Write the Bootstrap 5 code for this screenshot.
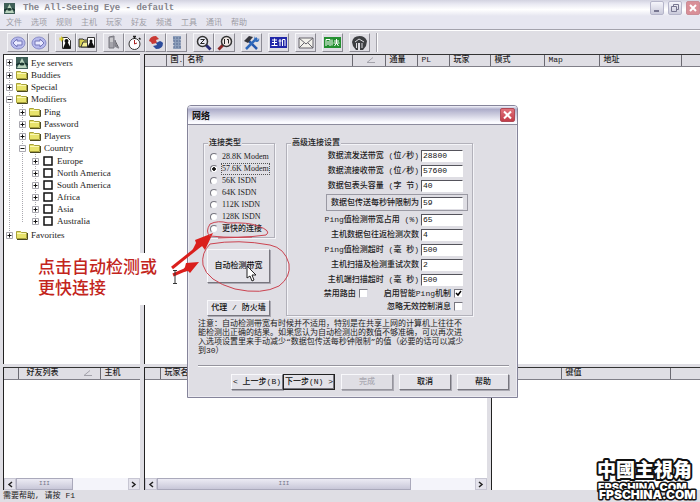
<!DOCTYPE html>
<html lang="zh-CN">
<head>
<meta charset="utf-8">
<meta name="viewport" content="width=device-width, initial-scale=1">
<title>The All-Seeing Eye - default</title>
<link href="https://cdn.jsdelivr.net/npm/bootstrap@5.3.0/dist/css/bootstrap.min.css" rel="stylesheet">
<style>
  :root { --face: #dfdee4; --edge: #85838c; --ink: #1d1c22; }
  body { font: 8px/12px "Liberation Mono", "Noto Sans CJK SC", monospace; color: var(--ink); background: var(--face); overflow: hidden; }
  .title-bar { height: 16px; padding-left: 4px; background: linear-gradient(#d3d3e0, #e9e9f2 25%, #fff 60%, #e6e6f0); }
  .title-bar h1 { font: bold 9px/16px "Liberation Mono", monospace; color: #85848c; }
  .win-btn { width: 14px; height: 14px; border: 1px solid #b5b5ca; border-radius: 2px; background: linear-gradient(#f5f5fb, #c9c9da); }
  .win-btn.shut { background: #d98f98; border-color: #cb8c96; }
  .menu-bar { height: 14px; background: #e6e6f0; border-bottom: 1px solid #a3a2ac; padding-left: 6px; gap: 9px; }
  .menu-bar a { color: #9d9ca5; line-height: 14px; text-decoration: none; }
  .tool-bar { height: 24px; padding: 2px 0 2px 7px; gap: 6px; border-top: 1px solid #fff; }
  .tool { width: 21px; height: 19px; border: 1px solid; border-color: #f6f6f9 #8b8a93 #8b8a93 #f6f6f9; background: var(--face); }
  .tool-end { width: 2px; border-left: 1px solid #a4a3ab; background: #fff; }
  .desk { display: grid; flex: 1; grid-template-rows: 310fr 123fr; gap: 3px; padding: 0 0 0 3px; }
  .row-top, .row-bottom { display: grid; gap: 4px; min-height: 0; }
  .row-top { grid-template-columns: 137fr 556fr; }
  .row-bottom { grid-template-columns: 137fr 343fr 209fr; }
  .pane { background: #fff; border-top: 1px solid #333; border-left: 1px solid #222; min-width: 0; overflow: hidden; }
  .grid-head { table-layout: fixed; width: 100%; border-collapse: collapse; }
  .grid-head th { height: 11px; line-height: 10px; padding: 0 0 0 4px; font-weight: 500; background: var(--face); border-right: 1px solid #6b6a72; border-bottom: 1px solid #807f88; white-space: nowrap; overflow: hidden; }
  .grid-head th:last-child { border-right: 0; }
  .tree, .tree ul { list-style: none; margin: 0; padding: 0; background: repeating-linear-gradient(#aaa9b0 0 1px, #fff 1px 2px) no-repeat; }
  .tree { font: 9px/12px "Liberation Serif", serif; padding: 1px 0 0 2px; background-position: 5px 7px; background-size: 1px calc(100% - 14px); }
  .tree ul { padding: 1px 0 1px 13px; background-position: 16px 0; background-size: 1px calc(100% - 7px); }
  .tree-item { gap: 3px; height: 12px; }
  .tree-item svg { flex: none; }
  .tree .first-item { height: 13px; }
  .scroll { height: 12px; background: #f4f4fa; }
  .scroll button { width: 12px; border: 1px solid #c7c6d3; background: #e4e3ec; padding: 0; }
  .thumb { border: 1px solid #aaa9bb; background: linear-gradient(#ecebf4, #c8c7d8); color: #77768a; font-size: 6px; line-height: 9px; text-align: center; }
  .thumb-half { width: 57px; }
  .thumb-wide { width: 254px; }
  .status { height: 12px; padding-left: 3px; line-height: 12px; }

  .dlg { left: 187px; top: 105px; width: 331px; background: var(--face); border: 1px solid #85849a; border-radius: 4px 4px 0 0; z-index: 5; box-shadow: inset 0 0 0 1px #ecebf1; }
  .dlg-title { height: 19px; padding: 0 2px 0 4px; border-bottom: 1px solid #8d8c9d; border-radius: 3px 3px 0 0; background: linear-gradient(#f4f4fb, #adadca 18%, #cfcfe0 50%, #fbfbff 90%); }
  .dlg-title h2 { font: bold 9px/19px "Noto Sans CJK SC", sans-serif; color: #111; }
  .dlg-close { width: 15px; height: 14px; border: 1px solid #b04a56; border-radius: 2px; background: linear-gradient(#e0727c, #c23c48); }
  .dlg-body { padding: 12px 8px 7px 10px; }
  .dlg fieldset { border: 1px solid #b2b1ba; box-shadow: 1px 1px #f4f4f8, inset 1px 1px #f4f4f8; }
  .dlg legend { float: none; width: auto; font-size: 8px; line-height: 12px; font-weight: 500; margin: 0 0 0 4px; padding: 0 1px; background: var(--face); }
  .links { width: 72px; padding: 0 0 2px 6px; }
  .links legend { margin: 0 0 2px -2px; }
  .link-opt { height: 12px; gap: 3px; }
  .link-opt label { font: 8px/10px "Liberation Serif", "Noto Sans CJK SC", serif; white-space: nowrap; border: 1px solid transparent; }
  .link-opt input:checked + label { border: 1px dotted #555; }
  .link-opt .cjk { font-weight: 500; }
  .opt-radio, .opt-check { appearance: none; width: 8px; height: 8px; margin: 0; flex: none; background: #fff; border: 1px solid; border-color: #77767f #dddde4 #dddde4 #77767f; }
  .opt-radio { border-radius: 50%; }
  .opt-radio:checked { background: radial-gradient(#111 0 1px, #111 36%, #fff 44%); }
  .opt-check { width: 9px; height: 9px; }
  .opt-check:checked { background: #fff url("data:image/svg+xml,%3Csvg xmlns='http://www.w3.org/2000/svg' viewBox='0 0 7 7'%3E%3Cpath d='M1 3l2 2 3-4' fill='none' stroke='%23000' stroke-width='1.5'/%3E%3C/svg%3E"); }
  .adv { width: 187px; margin-right: 36px; padding: 0 4px 2px 0; }
  .fields { gap: 2px; }
  .field { height: 13px; gap: 2px; padding: 0 4px; border: 1px solid transparent; font-weight: 500; white-space: nowrap; }
  .field.framed { height: 17px; border-color: #9a99a3; }
  .field input { width: 42px; height: 12px; min-height: 0; padding: 0 1px; border: 1px solid; border-color: #55545c #fff #fff #55545c; border-radius: 0; background: #fff; font: 8px/10px "Liberation Mono", monospace; color: #111; }
  .tick { gap: 3px; height: 13px; font-weight: 500; line-height: 12px; white-space: nowrap; }
  .ticks { padding: 1px 5px 0 0; }
  .dlg-btn { --bs-btn-padding-x: 0; --bs-btn-padding-y: 0; --bs-btn-font-size: 8px; --bs-btn-line-height: 12px; --bs-btn-border-radius: 0; --bs-btn-color: #111; --bs-btn-disabled-color: #aaa9b2; --bs-btn-disabled-opacity: 1; height: 16px; font-weight: 500; white-space: nowrap; border: 1px solid; border-color: #f8f8fb #77767e #77767e #f8f8fb; background: #e3e2e8; box-shadow: 1px 1px #aaa9b2; }
  .dlg-btn:disabled { border-color: #f8f8fb #96959d #96959d #f8f8fb; }
  .dlg-btn.detect { width: 63px; height: 34px; margin-top: 11px; }
  .dlg-btn.proxy { width: 63px; margin-top: 17px; }
  .dlg-btn.step { width: 52px; }
  .dlg-btn.chosen { border-color: #222; box-shadow: inset -1px -1px #77767e; }
  .side { padding-left: 5px; }
  .note { font-size: 8px; line-height: 9px; margin: 3px 0 10px; }
  .rule { border-top: 1px solid #95949d; border-bottom: 1px solid #fff; margin: 0 0 7px; }
  .steps { gap: 6px; }

  .tip { left: 33px; top: 253px; width: 150px; height: 52px; padding: 2px 5px; background: #fff; color: #c3251c; font: 500 17px/21px "Noto Sans CJK SC", sans-serif; white-space: nowrap; z-index: 4; }
  .marks { left: 160px; top: 212px; z-index: 6; pointer-events: none; }
  .brand { right: 0; bottom: 0; z-index: 3; }
</style>
<script src="https://cdn.jsdelivr.net/npm/bootstrap@5.3.0/dist/js/bootstrap.bundle.min.js"></script>
</head>
<body>
<svg class="d-none" aria-hidden="true">
  <symbol id="folder" viewBox="0 0 12 10"><path d="M.5 8.5v-7h4l1 1h5v6z" fill="#e8e36c" stroke="#a8a23a"/><path d="M1 3.5h9" stroke="#fbf9b5"/><path d="M1 9.5h10.5V3" fill="none" stroke="#4c4a22"/></symbol>
  <symbol id="plus" viewBox="0 0 7 7"><path d="M.5.5h6v6h-6z" fill="#fff" stroke="#a9a8b0"/><path d="M1.5 3.5h4M3.5 1.5v4" stroke="#111"/></symbol>
  <symbol id="minus" viewBox="0 0 7 7"><path d="M.5.5h6v6h-6z" fill="#fff" stroke="#a9a8b0"/><path d="M1.5 3.5h4" stroke="#111"/></symbol>
  <symbol id="box" viewBox="0 0 10 10"><path d="M1 1h8v8H1z" fill="#fff" stroke="#111" stroke-width="1.5"/></symbol>
  <symbol id="eye" viewBox="0 0 12 12"><path d="M0 0h12v12H0z" fill="#3f5f58"/><path d="M6 1l5 10H1z" fill="#b9d3bd"/><path d="M0 8l4-2M12 8L9 6" stroke="#16302d" stroke-width="1.5"/><ellipse cx="6" cy="7" rx="2.5" ry="1.5" fill="#1d3a32"/></symbol>
</svg>

<div class="d-flex flex-column vh-100 position-relative">
  <header class="title-bar d-flex align-items-center">
    <svg width="11" height="11" aria-hidden="true"><use href="#eye"/></svg>
    <h1 class="m-0 ms-2 flex-grow-1">The All-Seeing Eye - default</h1>
    <div class="d-flex gap-1 overflow-hidden">
      <button class="win-btn p-0 d-flex" aria-label="最小化"><svg width="12" height="12"><path d="M3 9h5" stroke="#777690" stroke-width="2"/></svg></button>
      <button class="win-btn p-0 d-flex" aria-label="还原"><svg width="12" height="12" fill="none" stroke="#777690"><path d="M2.5 4.5h5v5h-5zM4.5 4V2.5h5v5H8"/></svg></button>
      <button class="win-btn shut p-0 d-flex" aria-label="关闭"><svg width="12" height="12"><path d="M3 3l6 6M9 3L3 9" stroke="#fff" stroke-width="2"/></svg></button>
    </div>
  </header>
  <nav class="menu-bar d-flex">
    <a href="#">文件</a><a href="#">选项</a><a href="#">规则</a><a href="#">主机</a><a href="#">玩家</a><a href="#">好友</a><a href="#">频道</a><a href="#">工具</a><a href="#">通讯</a><a href="#">帮助</a>
  </nav>
  <div class="tool-bar d-flex" role="toolbar" aria-label="工具栏">
    <div class="d-flex">
      <button class="tool p-0 d-flex align-items-center justify-content-center" aria-label="后退"><svg width="16" height="14" viewBox="0 0 16 14"><ellipse cx="8" cy="7" rx="7" ry="6" fill="#b6b9ec" stroke="#8a8dc8"/><path d="M3 7l4-4v2h5v4H7v2z" fill="#e9eaff" stroke="#7477b8"/></svg></button>
      <button class="tool p-0 d-flex align-items-center justify-content-center" aria-label="前进"><svg width="16" height="14" viewBox="0 0 16 14"><ellipse cx="8" cy="7" rx="7" ry="6" fill="#b6b9ec" stroke="#8a8dc8"/><path d="M13 7L9 3v2H4v4h5v2z" fill="#e9eaff" stroke="#7477b8"/></svg></button>
    </div>
    <div class="d-flex">
      <button class="tool p-0 d-flex align-items-center justify-content-center" aria-label="新建"><svg width="16" height="15" viewBox="0 0 16 15"><path d="M4.5 2.5h5l3 3v8h-8z" fill="#fff" stroke="#333"/><path d="M8.5 5l4.5 8.5H5z" fill="#111"/><circle cx="8.5" cy="6" r="2" fill="#111"/><path d="M1 4h5M3.5 1.5v5M2 2.5l3 3M5 2.5l-3 3" stroke="#d8cc2c"/></svg></button>
      <button class="tool p-0 d-flex align-items-center justify-content-center" aria-label="打开"><svg width="18" height="15" viewBox="0 0 18 15"><path d="M1 12V4h4l1 1h5v7z" fill="#d6cf55" stroke="#333"/><path d="M3 12l2-5h7l-2 5z" fill="#f2ed92" stroke="#333"/><path d="M9.5 2.5h7v10h-7z" fill="#fff" stroke="#333"/><path d="M13 5l3.5 7h-7z" fill="#111"/><circle cx="13" cy="6" r="1.5" fill="#111"/></svg></button>
    </div>
    <div class="d-flex">
      <button class="tool p-0 d-flex align-items-center justify-content-center" aria-label="服务器"><svg width="15" height="15" viewBox="0 0 15 15"><path d="M3 2l5-1v12H3z" fill="#a5a4ab" stroke="#77767e"/><path d="M4 4h3M4 6h3" stroke="#eee"/><path d="M9 5v6l4 2M9 7l3 6" stroke="#88878f" stroke-width="1.5"/></svg></button>
      <button class="tool p-0 d-flex align-items-center justify-content-center" aria-label="计时"><svg width="15" height="16" viewBox="0 0 15 16"><circle cx="7.5" cy="9" r="5.5" fill="#fff" stroke="#333"/><path d="M7.5 9V5M7.5 9l2.5-1" stroke="#a22"/><path d="M6 1.5h3M7.5 2v2M12 3l1.5 1.5" stroke="#222" stroke-width="1.5"/></svg></button>
      <button class="tool p-0 d-flex align-items-center justify-content-center" aria-label="刷新"><svg width="16" height="15" viewBox="0 0 16 15"><path d="M1 6q1-5 7-5l3 3-3 1 1 3-5 1-1-2z" fill="#c93a35"/><path d="M15 8q0 6-7 6l-3-3 4-1-1-2 4-2 2 1z" fill="#2c4c9b"/></svg></button>
      <button class="tool p-0 d-flex align-items-center justify-content-center" aria-label="列表"><svg width="14" height="15" viewBox="0 0 14 15"><path d="M3 1h8v3l-1 1 1 2-1 2 1 2v3H3l1-3-1-2 1-2-1-2z" fill="#8d9fbb"/><path d="M3 3h8M3 6h8M3 9h8M3 12h8" stroke="#586d92" stroke-dasharray="2 1"/></svg></button>
    </div>
    <div class="d-flex">
      <button class="tool p-0 d-flex align-items-center justify-content-center" aria-label="查找"><svg width="16" height="16" viewBox="0 0 16 16"><path d="M9.5 9.5l5 5" stroke="#292c78" stroke-width="3"/><circle cx="6.5" cy="6.5" r="5" fill="#e9eaf3" stroke="#333" stroke-width="1.5"/><path d="M4.5 4.5h4l-4 4h4" fill="none" stroke="#222"/></svg></button>
      <button class="tool p-0 d-flex align-items-center justify-content-center" aria-label="查找玩家"><svg width="16" height="16" viewBox="0 0 16 16"><path d="M6.5 9.5l-5 5" stroke="#8c2927" stroke-width="3"/><circle cx="9.5" cy="6.5" r="5" fill="#f1e9e6" stroke="#333" stroke-width="1.5"/><path d="M7.5 4v5M10 4.5h1.5v4" fill="none" stroke="#222"/></svg></button>
    </div>
    <button class="tool p-0 d-flex align-items-center justify-content-center" aria-label="设置"><svg width="18" height="16" viewBox="0 0 18 16"><path d="M4 4l10 10" stroke="#2457ad" stroke-width="2.5"/><path d="M14 3L3 14" stroke="#2d68bb" stroke-width="2.5"/><path d="M1 6l5-5 4 1-5 6z" fill="#34353b"/><path d="M12 1v3l3 1 1-2q1 4-3 4-3-1-1-6z" fill="#356fbd"/></svg></button>
    <button class="tool p-0 d-flex align-items-center justify-content-center" aria-label="主机"><svg width="17" height="11" viewBox="0 0 17 11"><path d="M0 0h17v11H0z" fill="#2026a8"/><path d="M2 3h5M2 5.500h5M1.500 8.500h6M4.500 1.500v7M8.500 4h3M10 2v7M12.500 9V2.500h2.500V9" fill="none" stroke="#fff"/></svg></button>
    <button class="tool p-0 d-flex align-items-center justify-content-center" aria-label="邮件"><svg width="16" height="12" viewBox="0 0 16 12"><path d="M1 1h14v10H1z" fill="#f3f2ec" stroke="#66656c"/><path d="M1 1l7 6 7-6M1 11l5-5M15 11l-5-5" fill="none" stroke="#66656c"/></svg></button>
    <button class="tool p-0 d-flex align-items-center justify-content-center" aria-label="聊天"><svg width="17" height="11" viewBox="0 0 17 11"><path d="M0 0h17v11H0z" fill="#249031"/><path d="M2 9V2.500h4V9M4 4v4M8 2.500v6M10 4h5M9.500 6h6M12.500 2v4l-2 3M12.500 6l2 3" fill="none" stroke="#fff"/></svg></button>
    <button class="tool p-0 d-flex align-items-center justify-content-center" aria-label="主页"><svg width="17" height="16" viewBox="0 0 17 16"><path d="M8.5 1Q14 1 16 6l-1 5-3 4H9V8H7v7H5l-3-4-1-4q1-6 7.500-6z" fill="#3d3f42"/><path d="M4 7l4-3 5 3M5.500 8v5M11 8v5" fill="none" stroke="#dcdbe0"/></svg></button>
    <div class="tool-end"></div>
  </div>

  <main class="desk">
    <div class="row-top">
      <section class="pane" aria-label="服务器树">
        <ul class="tree">
          <li><div class="tree-item first-item d-flex align-items-center"><svg width="7" height="7"><use href="#plus"/></svg><svg width="12" height="12"><use href="#eye"/></svg>Eye servers</div></li>
          <li><div class="tree-item d-flex align-items-center"><svg width="7" height="7"><use href="#plus"/></svg><svg width="12" height="10"><use href="#folder"/></svg>Buddies</div></li>
          <li><div class="tree-item d-flex align-items-center"><svg width="7" height="7"><use href="#plus"/></svg><svg width="12" height="10"><use href="#folder"/></svg>Special</div></li>
          <li><div class="tree-item d-flex align-items-center"><svg width="7" height="7"><use href="#minus"/></svg><svg width="12" height="10"><use href="#folder"/></svg>Modifiers</div>
            <ul>
              <li><div class="tree-item d-flex align-items-center"><svg width="7" height="7"><use href="#plus"/></svg><svg width="12" height="10"><use href="#folder"/></svg>Ping</div></li>
              <li><div class="tree-item d-flex align-items-center"><svg width="7" height="7"><use href="#plus"/></svg><svg width="12" height="10"><use href="#folder"/></svg>Password</div></li>
              <li><div class="tree-item d-flex align-items-center"><svg width="7" height="7"><use href="#plus"/></svg><svg width="12" height="10"><use href="#folder"/></svg>Players</div></li>
              <li><div class="tree-item d-flex align-items-center"><svg width="7" height="7"><use href="#minus"/></svg><svg width="12" height="10"><use href="#folder"/></svg>Country</div>
                <ul>
                  <li><div class="tree-item d-flex align-items-center"><svg width="7" height="7"><use href="#plus"/></svg><svg width="12" height="10"><use href="#box"/></svg>Europe</div></li>
                  <li><div class="tree-item d-flex align-items-center"><svg width="7" height="7"><use href="#plus"/></svg><svg width="12" height="10"><use href="#box"/></svg>North America</div></li>
                  <li><div class="tree-item d-flex align-items-center"><svg width="7" height="7"><use href="#plus"/></svg><svg width="12" height="10"><use href="#box"/></svg>South America</div></li>
                  <li><div class="tree-item d-flex align-items-center"><svg width="7" height="7"><use href="#plus"/></svg><svg width="12" height="10"><use href="#box"/></svg>Africa</div></li>
                  <li><div class="tree-item d-flex align-items-center"><svg width="7" height="7"><use href="#plus"/></svg><svg width="12" height="10"><use href="#box"/></svg>Asia</div></li>
                  <li><div class="tree-item d-flex align-items-center"><svg width="7" height="7"><use href="#plus"/></svg><svg width="12" height="10"><use href="#box"/></svg>Australia</div></li>
                </ul>
              </li>
            </ul>
          </li>
          <li><div class="tree-item d-flex align-items-center"><svg width="7" height="7"><use href="#plus"/></svg><svg width="12" height="10"><use href="#folder"/></svg>Favorites</div></li>
        </ul>
      </section>
      <section class="pane" aria-label="主机列表">
        <table class="grid-head">
          <colgroup><col width="21"><col width="17"><col width="169"><col width="33"><col width="32"><col width="32"><col width="41"><col width="54"><col width="55"><col width="82"><col></colgroup>
          <thead><tr><th></th><th>国.</th><th>名称</th><th><svg class="d-block mx-auto" width="10" height="6"><path d="M1 5.500L7 .5M1 5.500h8" stroke="#a3a2aa"/></svg></th><th>通量</th><th>PL</th><th>玩家</th><th>模式</th><th>Map</th><th>地址</th><th></th></tr></thead>
        </table>
      </section>
    </div>
    <div class="row-bottom">
      <section class="pane d-flex flex-column" aria-label="好友">
        <table class="grid-head">
          <colgroup><col width="14"><col width="82"><col></colgroup>
          <thead><tr><th></th><th><span class="d-flex align-items-center ps-1">好友列表<svg class="ms-4" width="10" height="6"><path d="M1 5.500L7 .5M1 5.500h8" stroke="#a3a2aa"/></svg></span></th><th>主机</th></tr></thead>
        </table>
        <div class="scroll d-flex mt-auto">
          <button aria-label="向左" class="d-flex align-items-center justify-content-center"><svg width="6" height="7"><path d="M5 1L2 3.500 5 6" fill="none" stroke="#222" stroke-width="1.500"/></svg></button>
          <div class="thumb thumb-half">III</div>
          <button aria-label="向右" class="ms-auto d-flex align-items-center justify-content-center"><svg width="6" height="7"><path d="M1 1l3 2.500L1 6" fill="none" stroke="#222" stroke-width="1.500"/></svg></button>
        </div>
      </section>
      <section class="pane d-flex flex-column" aria-label="玩家">
        <table class="grid-head">
          <colgroup><col width="15"><col width="180"><col></colgroup>
          <thead><tr><th></th><th>玩家名称</th><th></th></tr></thead>
        </table>
        <div class="scroll d-flex mt-auto">
          <button aria-label="向左" class="d-flex align-items-center justify-content-center"><svg width="6" height="7"><path d="M5 1L2 3.500 5 6" fill="none" stroke="#222" stroke-width="1.500"/></svg></button>
          <div class="thumb thumb-wide">III</div>
          <button aria-label="向右" class="ms-auto d-flex align-items-center justify-content-center"><svg width="6" height="7"><path d="M1 1l3 2.500L1 6" fill="none" stroke="#222" stroke-width="1.500"/></svg></button>
        </div>
      </section>
      <section class="pane" aria-label="规则">
        <table class="grid-head">
          <colgroup><col width="69"><col width="109"><col></colgroup>
          <thead><tr><th></th><th>键值</th><th></th></tr></thead>
        </table>
      </section>
    </div>
  </main>
  <footer class="status">需要帮助, 请按 F1</footer>

  <div class="dlg position-absolute" role="dialog" aria-labelledby="dlg-name">
    <div class="dlg-title d-flex align-items-center justify-content-between">
      <h2 id="dlg-name" class="m-0">网络</h2>
      <button class="dlg-close p-0 d-flex" aria-label="关闭"><svg width="13" height="12"><path d="M3 2.500l7 7M10 2.500l-7 7" stroke="#fff" stroke-width="2"/></svg></button>
    </div>
    <form class="dlg-body" onsubmit="return false">
      <div class="d-flex">
        <div class="side">
          <fieldset class="links">
            <legend>连接类型</legend>
            <div class="link-opt d-flex align-items-center"><input class="opt-radio" type="radio" name="link" id="l1"><label for="l1">28.8K Modem</label></div>
            <div class="link-opt d-flex align-items-center"><input class="opt-radio" type="radio" name="link" id="l2" checked><label for="l2">57.6K Modem</label></div>
            <div class="link-opt d-flex align-items-center"><input class="opt-radio" type="radio" name="link" id="l3"><label for="l3">56K ISDN</label></div>
            <div class="link-opt d-flex align-items-center"><input class="opt-radio" type="radio" name="link" id="l4"><label for="l4">64K ISDN</label></div>
            <div class="link-opt d-flex align-items-center"><input class="opt-radio" type="radio" name="link" id="l5"><label for="l5">112K ISDN</label></div>
            <div class="link-opt d-flex align-items-center"><input class="opt-radio" type="radio" name="link" id="l6"><label for="l6">128K ISDN</label></div>
            <div class="link-opt d-flex align-items-center"><input class="opt-radio" type="radio" name="link" id="l7"><label class="cjk" for="l7">更快的连接</label></div>
          </fieldset>
          <div class="d-flex flex-column ps-1">
            <button type="button" class="btn dlg-btn detect">自动检测带宽</button>
            <button type="button" class="btn dlg-btn proxy">代理 / 防火墙</button>
          </div>
        </div>
        <fieldset class="adv ms-auto">
          <legend>高级连接设置</legend>
          <div class="d-flex flex-column align-items-end fields">
            <div class="field d-flex align-items-center"><label for="f1">数据流发送带宽 (位/秒)</label><input class="form-control" id="f1" value="28800"></div>
            <div class="field d-flex align-items-center"><label for="f2">数据流接收带宽 (位/秒)</label><input class="form-control" id="f2" value="57600"></div>
            <div class="field d-flex align-items-center"><label for="f3">数据包表头容量 (字 节)</label><input class="form-control" id="f3" value="40"></div>
            <div class="field framed d-flex align-items-center"><label for="f4">数据包传送每秒钟限制为</label><input class="form-control" id="f4" value="59"></div>
            <div class="field d-flex align-items-center"><label for="f5">Ping值检测带宽占用 (%)</label><input class="form-control" id="f5" value="65"></div>
            <div class="field d-flex align-items-center"><label for="f6">主机数据包往返检测次数</label><input class="form-control" id="f6" value="4"></div>
            <div class="field d-flex align-items-center"><label for="f7">Ping值检测超时 (毫 秒)</label><input class="form-control" id="f7" value="500"></div>
            <div class="field d-flex align-items-center"><label for="f8">主机扫描及检测重试次数</label><input class="form-control" id="f8" value="2"></div>
            <div class="field d-flex align-items-center"><label for="f9">主机端扫描超时 (毫 秒)</label><input class="form-control" id="f9" value="500"></div>
          </div>
          <div class="ticks d-flex flex-column align-items-end">
            <div class="d-flex gap-3">
              <div class="tick d-flex align-items-center"><label for="c1">禁用路由</label><input class="opt-check" type="checkbox" id="c1"></div>
              <div class="tick d-flex align-items-center"><label for="c2">启用智能Ping机制</label><input class="opt-check" type="checkbox" id="c2" checked></div>
            </div>
            <div class="tick d-flex align-items-center"><label for="c3">忽略无效控制消息</label><input class="opt-check" type="checkbox" id="c3"></div>
          </div>
        </fieldset>
      </div>
      <p class="note">注意：自动检测带宽有时候并不适用，特别是在共享上网的计算机上往往不<br>能检测出正确的结果。如果您认为自动检测出的数值不够准确，可以再次进<br>入选项设置里来手动减少“数据包传送每秒钟限制”的值（必要的话可以减少<br>到30）</p>
      <div class="rule"></div>
      <div class="steps d-flex justify-content-end">
        <div class="d-flex">
          <button type="button" class="btn dlg-btn step">&lt; 上一步(B)</button>
          <button type="button" class="btn dlg-btn step chosen">下一步(N) &gt;</button>
        </div>
        <button type="button" class="btn dlg-btn step" disabled>完成</button>
        <button type="button" class="btn dlg-btn step">取消</button>
        <button type="button" class="btn dlg-btn step">帮助</button>
      </div>
    </form>
  </div>

  <div class="tip position-absolute">点击自动检测或<br>更快连接</div>
  <svg class="marks position-absolute" width="140" height="90" viewBox="160 212 140 90" fill="none" aria-hidden="true">
    <path d="M172 268l30-24" stroke="#da1f1c" stroke-width="3"/>
    <path d="M213 233l-8 17-3-4-10 5 4-8-1-3z" fill="#da1f1c"/>
    <path d="M173 275l14-6" stroke="#da1f1c" stroke-width="3"/>
    <path d="M199 262l-9 11-2-2-6 1 3-5 1-4z" fill="#da1f1c"/>
    <path d="M210 224q-5 8 0 12 28 3 56-1 6-4-8-9-10-4-30-3-10-3-18 1M218 238l34-1" stroke="#cb4350"/>
    <path d="M210 244q-9 9-7 21 4 16 32 24 27 6 44-3 12-9 10-22-4-16-19-19-32-6-60-1z" stroke="#cb4350"/>
    <path d="M247 266v12l3-2 2 5 2-1-2-5h4z" fill="#fff" stroke="#222"/>
    <path d="M173 270.500h4M175 271v12M173 283.500h4" stroke="#333"/>
  </svg>
  <svg class="brand position-absolute" width="108" height="46" viewBox="592 456 108 46">
    <g fill="#fff" stroke="#111" paint-order="stroke" stroke-linejoin="round" font-weight="900">
      <text x="597" y="477" font-size="19" stroke-width="4" font-family="Noto Sans CJK TC, sans-serif">中國主視角</text>
      <text x="598" y="491" font-size="11" stroke-width="3" font-family="Inter, sans-serif">FPSCHINA.COM</text>
      <text x="599" y="499" font-size="12" stroke-width="3" font-family="Inter, sans-serif">FPSCHINA.COM</text>
    </g>
  </svg>
</div>
</body>
</html>
